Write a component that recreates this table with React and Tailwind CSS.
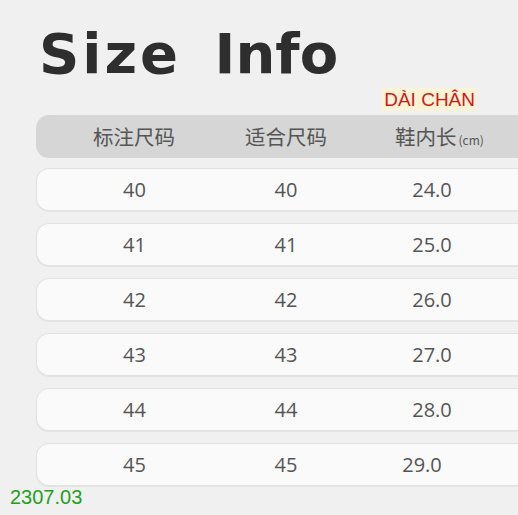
const ROWS = [
  ['40', '40', '24.0'],
  ['41', '41', '25.0'],
  ['42', '42', '26.0'],
  ['43', '43', '27.0'],
  ['44', '44', '28.0'],
  ['45', '45', '29.0'],
]

const cjk = "font-['Noto_Sans_CJK_SC','Noto_Sans',sans-serif]"
const num = "font-['Open_Sans','Noto_Sans',sans-serif]"

export default function App() {
  return (
    <div className="relative w-[518px] h-[515px] overflow-hidden bg-[#f0f0f0]">
      <div className="pl-[36px] pt-[20px]">
        <h1 className="h-[68px] pl-[3px] text-[56px] leading-[68px] font-bold text-[#2e2e2e] font-['DejaVu_Sans',sans-serif] [word-spacing:14px]">
          <span className="tracking-[3px]">Size</span> Info
        </h1>

        <div className="flex h-[27px] items-start justify-end pr-[41px]">
          <span className="bg-[#fbf3d6] px-[2px] text-[19px] leading-[23px] text-[#d01818] font-['Liberation_Sans',sans-serif]">
            DÀI CHÂN
          </span>
        </div>

        <div className="flex w-[520px] flex-col gap-[12px]">
          <div className={`flex h-[43px] items-center rounded-l-[13px] bg-[#d6d6d6] text-[20.5px] text-[#555] ${cjk}`}>
            <span className="w-[196px] text-center">标注尺码</span>
            <span className="w-[108px] text-center">适合尺码</span>
            <span className="w-[189px] pl-[10px] text-center">
              鞋内长<span className="ml-[2px] text-[12px]">(cm)</span>
            </span>
          </div>
          <div className="-mt-[2px] flex flex-col gap-[12px]">
            {ROWS.map((r, i) => (
              <div
                key={r[0]}
                className={`flex h-[43px] items-center rounded-l-[13px] border border-r-0 border-[#e2e2e2] bg-[#fafafa] text-[20px] text-[#555] shadow-[0_1px_1px_rgba(0,0,0,0.06)] ${num}`}
              >
                <span className="w-[195px] text-center">{r[0]}</span>
                <span className="w-[108px] text-center">{r[1]}</span>
                <span className={i === 5 ? 'w-[164px] text-center' : 'w-[184px] text-center'}>{r[2]}</span>
              </div>
            ))}
          </div>
        </div>
      </div>
      <div className="absolute left-[10px] top-[485px] text-[20px] leading-[24px] text-[#22a022] font-['Liberation_Sans',sans-serif]">
        2307.03
      </div>
    </div>
  )
}
